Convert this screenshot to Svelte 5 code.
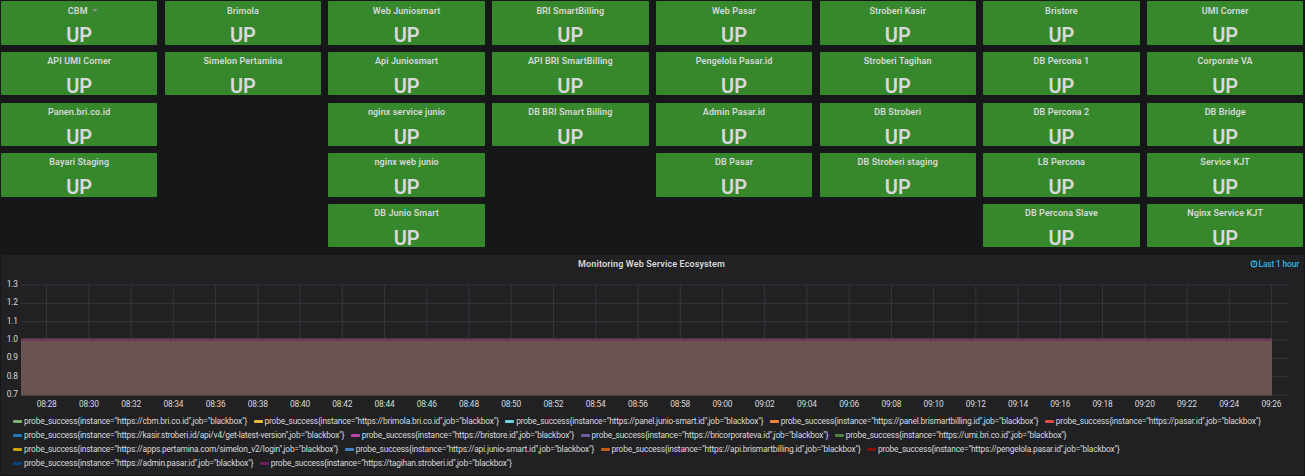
<script>
  const columns = [
    ['CBM', 'API UMI Corner', 'Panen.bri.co.id', 'Bayari Staging'],
    ['Brimola', 'Simelon Pertamina'],
    ['Web Juniosmart', 'Api Juniosmart', 'nginx service junio', 'nginx web junio', 'DB Junio Smart'],
    ['BRI SmartBilling', 'API BRI SmartBilling', 'DB BRI Smart Billing'],
    ['Web Pasar', 'Pengelola Pasar.id', 'Admin Pasar.id', 'DB Pasar'],
    ['Stroberi Kasir', 'Stroberi Tagihan', 'DB Stroberi', 'DB Stroberi staging'],
    ['Bristore', 'DB Percona 1', 'DB Percona 2', 'LB Percona', 'DB Percona Slave'],
    ['UMI Corner', 'Corporate VA', 'DB Bridge', 'Service KJT', 'Nginx Service KJT'],
  ];

  const legend = [
    [
      ['#7eb26d', 'cbm.bri.co.id'],
      ['#eab839', 'brimola.bri.co.id'],
      ['#6ed0e0', 'panel.junio-smart.id'],
      ['#ef843c', 'panel.brismartbilling.id'],
      ['#e24d42', 'pasar.id'],
    ],
    [
      ['#1f78c1', 'kasir.stroberi.id/api/v4/get-latest-version'],
      ['#ba43a9', 'bristore.id'],
      ['#705da0', 'bricorporateva.id'],
      ['#508642', 'umi.bri.co.id'],
    ],
    [
      ['#cca300', 'apps.pertamina.com/simelon_v2/login'],
      ['#447ebc', 'api.junio-smart.id'],
      ['#c15c17', 'api.brismartbilling.id'],
      ['#890f02', 'pengelola.pasar.id'],
    ],
    [
      ['#0a437c', 'admin.pasar.id'],
      ['#6d1f62', 'tagihan.stroberi.id'],
    ],
  ];

  const label = (host) => `probe_success{instance="https://${host}",job="blackbox"}`;

  const times = Array.from({ length: 30 }, (_, i) => {
    const m = 8 * 60 + 28 + i * 2;
    return {
      x: 46.6 + i * 42.24,
      text: `${String(Math.floor(m / 60)).padStart(2, '0')}:${String(m % 60).padStart(2, '0')}`,
    };
  });
  const values = ['1.3', '1.2', '1.1', '1.0', '0.9', '0.8', '0.7'].map((text, i) => ({
    text,
    y: 30.5 + i * 18.35,
  }));
</script>

<main>
  <section class="stats">
    {#each columns as column, c}
      <div class="column">
        {#each column as name, r}
          <article class="stat">
            <h2>
              {name}{#if c === 0 && r === 0}<i class="caret"></i>{/if}
            </h2>
            <strong>UP</strong>
            {#if c === 0 && r === 0}<i class="resize"></i>{/if}
          </article>
        {/each}
      </div>
    {/each}
  </section>

  <section class="graph">
    <header>
      <span></span>
      <h1>Monitoring Web Service Ecosystem</h1>
      <div class="range">
        <svg width="8" height="8" viewBox="0 0 8 8">
          <circle cx="4" cy="4" r="2.9" fill="none" stroke="#33b5e5" stroke-width="1.1" />
          <path d="M4.3 2.2V4.3H2.8" fill="none" stroke="#33b5e5" stroke-width=".8" />
        </svg>
        <span>Last 1 hour</span>
      </div>
    </header>
    <svg class="plot" width="1303" height="140" viewBox="1 0 1303 140">
      <g stroke="#37373a">
        {#each values as v}<line x1="21" x2="1289" y1={v.y} y2={v.y} />{/each}
        {#each times as t}<line x1={t.x} x2={t.x} y1="30.4" y2="140.5" />{/each}
      </g>
      <rect x="21" y="85" width="1251" height="56" fill="#705654" fill-opacity=".94" />
      <rect x="21" y="84" width="1251" height="1" fill="#7d4b5d" />
      <rect x="21" y="85" width="1251" height="1" fill="#6d3060" />
      <g class="axis" text-anchor="end">
        {#each values as v}<text x="17.8" y={v.y + 2}>{v.text}</text>{/each}
      </g>
    </svg>
    <div class="times">
      {#each times as t}<span>{t.text}</span>{/each}
    </div>
    <div class="legend">
      {#each legend as row}
        <div class="legend-row">
          {#each row as [color, host]}
            <div class="series">
              <i style:background={color}></i><span>{label(host)}</span>
            </div>
          {/each}
        </div>
      {/each}
    </div>
  </section>
</main>

<style>
  :global(body) {
    background: #161719;
  }
  main {
    box-sizing: border-box;
    width: 1305px;
    height: 476px;
    padding: 1.2px 1px 1px;
    overflow: hidden;
    background: #161719;
    color: #d8d9da;
    font-family: Roboto, sans-serif;
  }
  .stats {
    display: grid;
    grid-template-columns: repeat(8, 156.45px);
    column-gap: 7.28px;
    height: 252.8px;
  }
  .column {
    display: flex;
    flex-direction: column;
    gap: 7.27px;
  }
  .stat {
    position: relative;
    flex: none;
    height: 43.4px;
    border-radius: 1px;
    background: #37872d;
    text-align: center;
  }
  h1,
  h2 {
    margin: 0;
    font-size: 9px;
    font-weight: 600;
  }
  h2 {
    box-sizing: border-box;
    height: 18px;
    padding-top: 0.33px;
    line-height: 18.5px;
    letter-spacing: 0.1px;
  }
  .caret {
    display: inline-block;
    margin: 0 -7px 2px 4px;
    border: 3px solid transparent;
    border-top: 3px solid #8a8d8b;
    border-bottom: 0;
  }
  .stat strong {
    display: block;
    font-size: 20px;
    font-weight: 600;
    line-height: 32px;
  }
  .resize {
    position: absolute;
    right: 1px;
    bottom: 1px;
    width: 3px;
    height: 3px;
    border: solid #59645a;
    border-width: 0 1px 1px 0;
  }
  .graph {
    height: 220px;
    margin-top: 1px;
    background: #212124;
  }
  .graph header {
    display: grid;
    grid-template-columns: 1fr auto 1fr;
    align-items: center;
    height: 18px;
    margin-bottom: -19px;
    padding-right: 5px;
  }
  h1 {
    padding-left: 3px;
    line-height: 18px;
    letter-spacing: 0.13px;
  }
  .range {
    display: flex;
    justify-content: flex-end;
    align-items: center;
    gap: 1px;
    color: #33b5e5;
    font-size: 8.4px;
    font-weight: 500;
    letter-spacing: -0.15px;
  }
  .plot {
    display: block;
    height: 141px;
    overflow: visible;
  }
  .axis {
    fill: #d8d9da;
    font-size: 8.4px;
    letter-spacing: -0.2px;
  }
  .times {
    display: flex;
    height: 18px;
    padding-left: 24.5px;
  }
  .times span {
    flex: none;
    width: 42.24px;
    font-size: 8.4px;
    letter-spacing: -0.2px;
    line-height: 19px;
    text-align: center;
  }
  .legend {
    padding: 1.5px 0 0 12px;
  }
  .legend-row {
    display: flex;
    gap: 6.4px;
    height: 14px;
  }
  .series {
    display: flex;
    align-items: center;
    gap: 2px;
    font-size: 8.4px;
    letter-spacing: -0.2px;
    line-height: 14px;
    white-space: nowrap;
  }
  .series i {
    width: 9px;
    height: 3px;
    border-radius: 1px;
  }
</style>
